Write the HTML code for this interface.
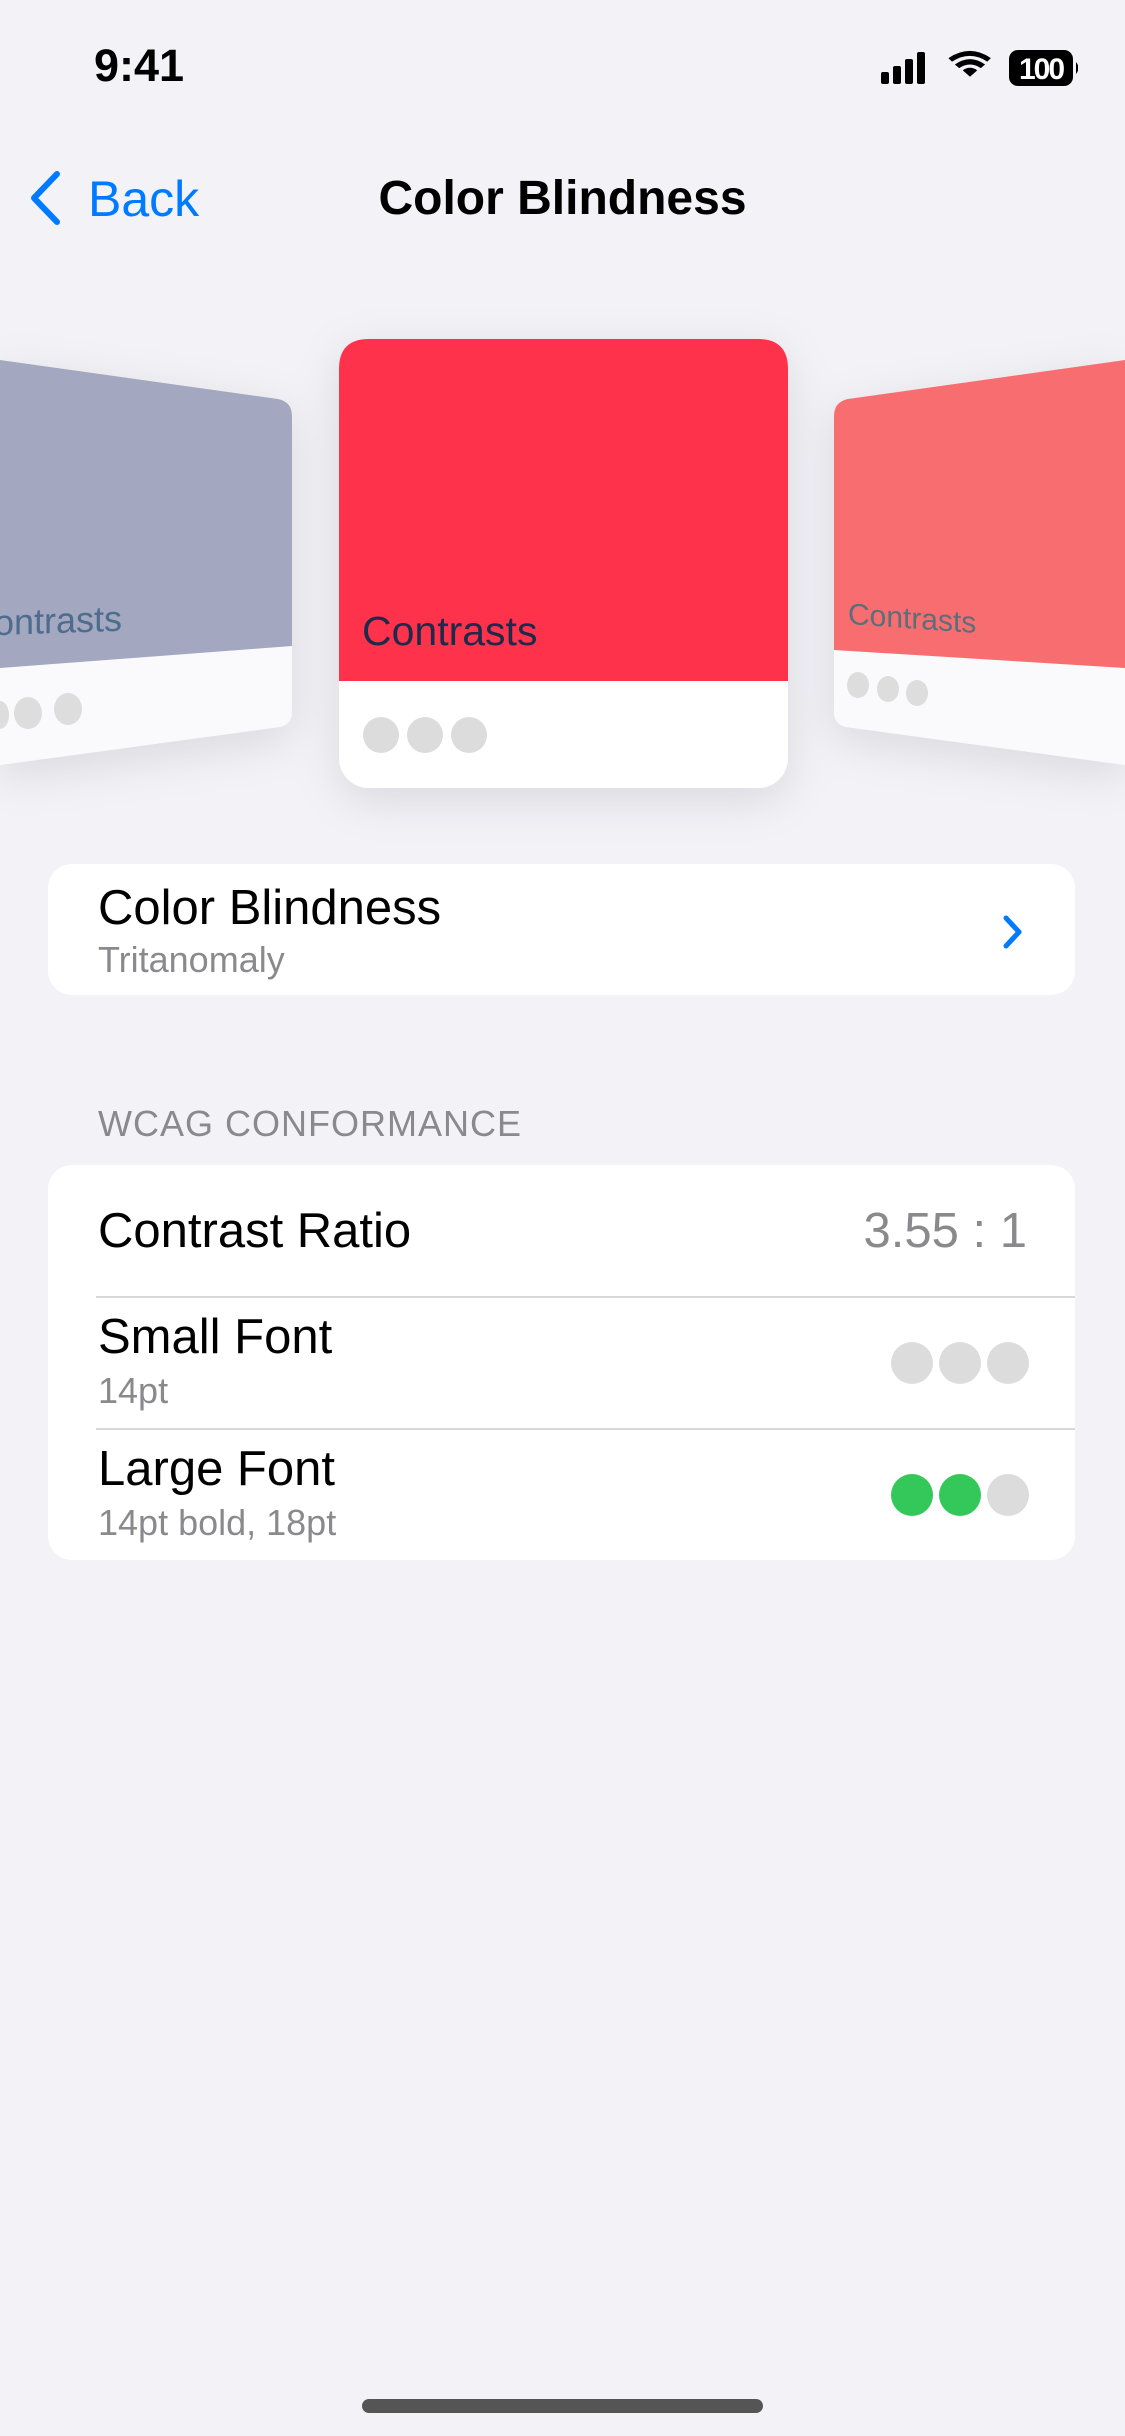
<!DOCTYPE html>
<html><head><meta charset="utf-8"><style>
*{margin:0;padding:0;box-sizing:border-box}
body{width:1125px;height:2436px;background:#f2f2f7;font-family:"Liberation Sans",sans-serif;position:relative;overflow:hidden;color:#000}
.abs{position:absolute}
.card{position:absolute;left:48px;width:1027px;background:#fff;border-radius:24px}
.t{position:absolute;font-size:49px;color:#000;white-space:nowrap}
.s{position:absolute;font-size:36px;color:#8a8a8e;white-space:nowrap}
.dot{position:absolute;width:42px;height:42px;border-radius:50%;background:#dcdcdc}
</style></head><body>
<div class="abs" style="left:94px;top:40px;font-size:45px;font-weight:bold">9:41</div>
<svg class="abs" style="left:878px;top:48px" width="200" height="40" viewBox="0 0 200 40">
 <rect x="3" y="24" width="8" height="12" rx="2"/><rect x="15" y="18" width="8" height="18" rx="2"/><rect x="27" y="11" width="8" height="25" rx="2"/><rect x="39" y="4" width="8" height="32" rx="2"/>
 <g transform="translate(92 0) scale(0.72) translate(-92 0)"><path d="M62 14 Q92 -6 121 14 L116 19 Q92 3 67 19Z"/><path d="M71 23 Q92 8 113 23 L107 28 Q92 18 77 28Z"/><path d="M82 31 Q92 24 102 31 L92 40Z"/></g>
 <rect x="131" y="2" width="64" height="36" rx="9"/><path d="M198 14 Q203 20 198 26Z"/>
 <text x="163" y="31" font-family="Liberation Sans" font-weight="bold" font-size="30" fill="#fff" text-anchor="middle" letter-spacing="-2">100</text>
</svg>
<svg class="abs" style="left:24px;top:168px" width="40" height="60"><path d="M33 6 L10 30 L33 54" fill="none" stroke="#007aff" stroke-width="6" stroke-linecap="round" stroke-linejoin="round"/></svg>
<div class="abs" style="left:88px;top:170px;font-size:50px;color:#007aff">Back</div>
<div class="abs" style="left:0;width:1125px;top:171px;text-align:center;font-size:48px;font-weight:bold">Color Blindness</div>

<svg class="abs" style="left:0;top:300px" width="1125" height="560" viewBox="0 300 1125 560">
 <defs><filter id="sh" x="-20%" y="-20%" width="140%" height="150%"><feDropShadow dx="0" dy="12" stdDeviation="22" flood-color="#000" flood-opacity="0.1"/></filter></defs>
 <g filter="url(#sh)">
  <path d="M0 360 L278 399 Q292 402 292 416 L292 712 Q292 724 280 727 L0 765Z" fill="#fafafc"/>
  <path d="M0 360 L278 399 Q292 402 292 416 L292 646 L0 668Z" fill="#a3a7bf"/>
  <path d="M1125 360 L848 399 Q834 402 834 416 L834 712 Q834 724 846 727 L1125 765Z" fill="#fafafc"/>
  <path d="M1125 360 L848 399 Q834 402 834 416 L834 650 L1125 668Z" fill="#f76d6f"/>
  <rect x="339" y="339" width="449" height="449" rx="30" fill="#fff"/>
  <path d="M369 339 H758 Q788 339 788 369 V681 H339 V369 Q339 339 369 339Z" fill="#fe314b"/>
 </g>
 <text x="-6" y="635" font-family="Liberation Sans" font-size="36" fill="#4d6c8e" transform="skewY(-2)" style="transform-origin:0 635px">ontrasts</text>
 <ellipse cx="0" cy="715" rx="9" ry="14" fill="#ddd"/><ellipse cx="28" cy="713" rx="14" ry="16" fill="#ddd"/><ellipse cx="68" cy="709" rx="14" ry="16" fill="#ddd"/>
 <text x="848" y="624" font-family="Liberation Sans" font-size="30" fill="#5b6f7a" transform="skewY(4)" style="transform-origin:848px 624px">Contrasts</text>
 <ellipse cx="858" cy="685" rx="11" ry="13" fill="#ddd"/><ellipse cx="888" cy="689" rx="11" ry="13" fill="#ddd"/><ellipse cx="917" cy="693" rx="11" ry="13" fill="#ddd"/>
 <text x="362" y="645" font-family="Liberation Sans" font-size="41" fill="#1e2a4a">Contrasts</text>
 <circle cx="381" cy="735" r="18" fill="#dcdcdc"/><circle cx="425" cy="735" r="18" fill="#dcdcdc"/><circle cx="469" cy="735" r="18" fill="#dcdcdc"/>
</svg>

<div class="card" style="top:864px;height:131px">
 <div class="t" style="left:50px;top:16px">Color Blindness</div>
 <div class="s" style="left:50px;top:75px">Tritanomaly</div>
 <svg class="abs" style="left:953px;top:50px" width="24" height="36"><path d="M5 4 L18 18 L5 32" fill="none" stroke="#007aff" stroke-width="5" stroke-linecap="round" stroke-linejoin="round"/></svg>
</div>
<div class="s" style="left:98px;top:1103px;font-size:36px;letter-spacing:1px">WCAG CONFORMANCE</div>
<div class="card" style="top:1165px;height:395px">
 <div class="t" style="left:50px;top:38px">Contrast Ratio</div>
 <div class="abs" style="right:48px;top:38px;font-size:49px;color:#8a8a8e">3.55 : 1</div>
 <div class="abs" style="left:48px;right:0;top:131px;height:2px;background:#d8d8dc"></div>
 <div class="t" style="left:50px;top:144px">Small Font</div>
 <div class="s" style="left:50px;top:205px">14pt</div>
 <div class="dot" style="left:843px;top:177px"></div><div class="dot" style="left:891px;top:177px"></div><div class="dot" style="left:939px;top:177px"></div>
 <div class="abs" style="left:48px;right:0;top:263px;height:2px;background:#d8d8dc"></div>
 <div class="t" style="left:50px;top:276px">Large Font</div>
 <div class="s" style="left:50px;top:337px">14pt bold, 18pt</div>
 <div class="dot" style="left:843px;top:309px;background:#34c759"></div><div class="dot" style="left:891px;top:309px;background:#34c759"></div><div class="dot" style="left:939px;top:309px"></div>
</div>
<div class="abs" style="left:362px;top:2399px;width:401px;height:14px;border-radius:7px;background:#555"></div>
</body></html>
